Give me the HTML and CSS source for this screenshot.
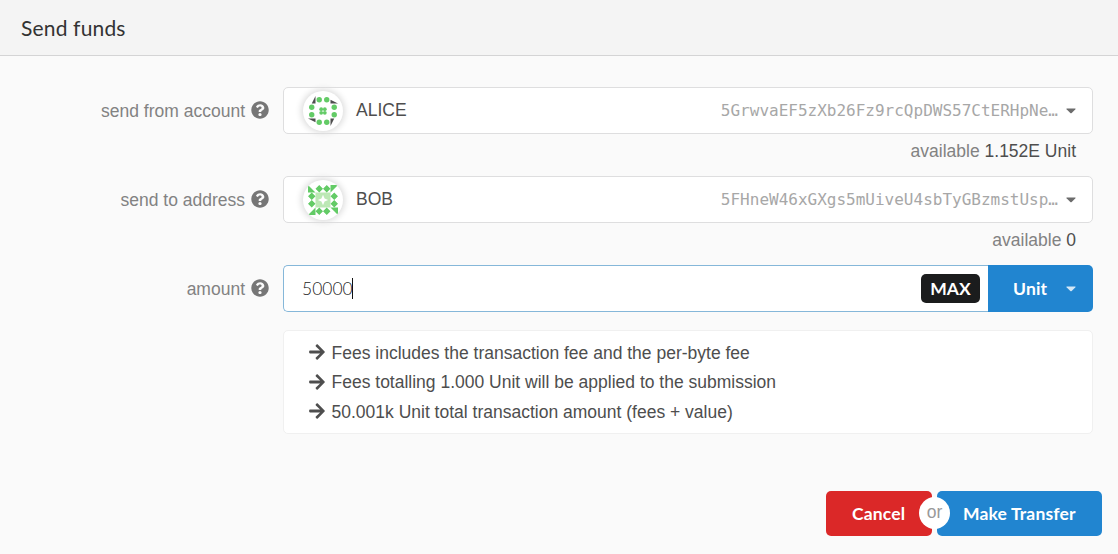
FILE: index.html
```html
<!DOCTYPE html>
<html lang="en">
<head>
<meta charset="utf-8">
<title>Send funds</title>
<link rel="stylesheet" href="styles.css">
</head>
<body>
<svg class="defs" aria-hidden="true">
  <symbol id="help" viewBox="0 0 512 512"><path d="M504 256c0 136.997-111.043 248-248 248S8 392.997 8 256C8 119.083 119.043 8 256 8s248 111.083 248 248zM262.655 90c-54.497 0-89.255 22.957-116.549 63.758-3.536 5.286-2.353 12.415 2.715 16.258l34.699 26.31c5.205 3.947 12.621 3.008 16.665-2.122 17.864-22.658 30.113-35.797 57.303-35.797 20.429 0 45.698 13.148 45.698 32.958 0 14.976-12.363 22.667-32.534 33.976C247.128 238.528 216 254.941 216 296v4c0 6.627 5.373 12 12 12h56c6.627 0 12-5.373 12-12v-1.333c0-28.462 83.186-29.647 83.186-106.667 0-58.002-60.165-102-116.531-102zM256 338c-25.365 0-46 20.635-46 46 0 25.364 20.635 46 46 46s46-20.636 46-46c0-25.365-20.635-46-46-46z"/></symbol>
  <symbol id="arrow" viewBox="0 0 448 512"><path d="M190.5 66.9l22.2-22.2c9.4-9.4 24.6-9.4 33.9 0L441 239c9.4 9.4 9.4 24.6 0 33.9L246.6 467.3c-9.4 9.4-24.6 9.4-33.9 0l-22.2-22.2c-9.5-9.5-9.3-25 .4-34.3L311.400 296H24c-13.300 0-24-10.700-24-24v-32c0-13.300 10.700-24 24-24h287.400L190.900 101.200c-9.800-9.300-10-24.800-.4-34.300z"/></symbol>
</svg>
<header class="header">Send funds</header>
<main class="content">
  <div class="row">
    <label class="label">send from account <svg class="help"><use href="#help"/></svg></label>
    <div class="field">
      <div class="select">
        <svg class="identicon" viewBox="-20 -20 40 40">
          <defs><g id="alice-side"><circle cx="-3.75" cy="-11.25" r="2.7"/><circle cx="3.75" cy="-11.25" r="2.7"/><path class="dark" d="M-7.500-15v7.500h-3.750z"/><circle cx="-1.800" cy="-1.800" r="1.900"/></g></defs>
          <g class="green"><use href="#alice-side"/><use href="#alice-side" transform="rotate(90)"/><use href="#alice-side" transform="rotate(180)"/><use href="#alice-side" transform="rotate(270)"/></g>
        </svg>
        <span class="name">ALICE</span>
        <span class="address">5GrwvaEF5zXb26Fz9rcQpDWS57CtERHpNe…</span>
        <svg class="caret" viewBox="0 0 10 6"><path d="M.8.5h8.400q.8.100.2.800L5.700 5q-.7.700-1.400 0L.6 1.300Q0 .6.8.500z"/></svg>
      </div>
      <div class="balance">available <b>1.152E Unit</b></div>
    </div>
  </div>
  <div class="row">
    <label class="label">send to address <svg class="help"><use href="#help"/></svg></label>
    <div class="field">
      <div class="select">
        <svg class="identicon" viewBox="-20 -20 40 40">
          <defs><g id="bob-side"><path d="M-3.750-15l3.750 3.750-3.750 3.750-3.750-3.750zM3.750-15l3.750 3.750-3.750 3.750L0-11.250zM-15-15l7.500 7.500H-15z"/></g></defs>
          <path class="pale" d="M-7.500-7.500h15v15h-15z"/>
          <g class="green"><use href="#bob-side"/><use href="#bob-side" transform="rotate(90)"/><use href="#bob-side" transform="rotate(180)"/><use href="#bob-side" transform="rotate(270)"/></g>
          <path class="white" d="M0-5.200L1.600-1.600 5.200 0 1.600 1.600 0 5.200-1.600 1.600-5.200 0-1.600-1.600z"/>
        </svg>
        <span class="name">BOB</span>
        <span class="address">5FHneW46xGXgs5mUiveU4sbTyGBzmstUsp…</span>
        <svg class="caret" viewBox="0 0 10 6"><path d="M.8.5h8.400q.8.100.2.800L5.700 5q-.7.700-1.400 0L.6 1.300Q0 .6.8.500z"/></svg>
      </div>
      <div class="balance">available <b>0</b></div>
    </div>
  </div>
  <div class="row amount-row">
    <label class="label">amount <svg class="help"><use href="#help"/></svg></label>
    <div class="field amount">
      <div class="input"><span class="value">50000</span><span class="cursor"></span><span class="max">MAX</span></div>
      <div class="unit">Unit<svg class="caret" viewBox="0 0 10 6"><path d="M.8.5h8.400q.8.100.2.800L5.700 5q-.7.700-1.400 0L.6 1.300Q0 .6.8.500z"/></svg></div>
    </div>
  </div>
  <ul class="fees">
    <li><svg class="arrow"><use href="#arrow"/></svg>Fees includes the transaction fee and the per-byte fee</li>
    <li><svg class="arrow"><use href="#arrow"/></svg>Fees totalling 1.000 Unit will be applied to the submission</li>
    <li><svg class="arrow"><use href="#arrow"/></svg>50.001k Unit total transaction amount (fees + value)</li>
  </ul>
</main>
<footer class="actions">
  <div class="button cancel">Cancel</div>
  <div class="gap"><span class="or">or</span></div>
  <div class="button transfer">Make Transfer</div>
</footer>
</body>
</html>
```
FILE: styles.css
```css
* { box-sizing: border-box; }
body {
  margin: 0;
  width: 1118px;
  height: 554px;
  overflow: hidden;
  display: flex;
  flex-direction: column;
  background: #fafafa;
  color: #4e4e4e;
  font: 17.5px/24px "Liberation Sans", Arial, sans-serif;
}
.defs { display: none; }
.header {
  height: 56px;
  padding: 0 21px;
  border-bottom: 1px solid #d4d4d5;
  background: #f4f4f4;
  color: #333;
  font: 21px/56px Lato, sans-serif;
  letter-spacing: 0.17px;
}
.content { padding: 31px 25px 0 0; }
.row { display: flex; height: 89px; }
.amount-row { height: 65px; }
.label {
  width: 283px;
  height: 47px;
  padding-right: 14px;
  display: flex;
  align-items: center;
  justify-content: flex-end;
  gap: 6px;
  color: #828282;
}
.help { width: 18px; height: 18px; margin-bottom: 1px; fill: #767676; }
.field { flex: 1; }
.select {
  height: 47px;
  display: flex;
  align-items: center;
  padding: 0 16px 0 19px;
  border: 1px solid #dededf;
  border-radius: 5px;
  background: #fff;
}
.identicon { width: 40px; height: 40px; border-radius: 50%; background: #fff; box-shadow: 0 0 6px 2px #ddd; }
.green { fill: #63cb66; }
.dark { fill: #4e4e4e; }
.pale { fill: #bce8b5; }
.white { fill: #fff; }
.name { margin: 0 0 2px 13px; }
.address { margin-left: auto; color: #a7a7a7; font: 16px/24px "DejaVu Sans Mono", monospace; }
.caret { width: 10px; height: 6px; margin-left: 8px; fill: #6c6c6c; }
.balance { padding: 5px 17px 0 0; text-align: right; color: #828282; }
.balance b { color: #4e4e4e; font-weight: 400; }
.amount { display: flex; height: 47px; }
.input {
  flex: 1;
  display: flex;
  align-items: center;
  padding: 0 7px 0 18px;
  border: 1px solid #85b7d9;
  border-right: 0;
  border-radius: 5px 0 0 5px;
  background: #fff;
  color: #222;
  font: 300 17.5px/24px Lato, sans-serif;
}
.cursor { width: 1px; height: 21px; margin-left: -1px; background: #111; }
.max {
  width: 59px;
  height: 29px;
  margin: 0 1px 0 auto;
  border-radius: 5px;
  background: #1b1c1d;
  color: #fff;
  font: 700 17.5px/29px Lato, sans-serif;
  text-align: center;
}
.unit {
  width: 105px;
  display: flex;
  align-items: center;
  justify-content: space-between;
  padding: 0 17px 0 25px;
  border-radius: 0 5px 5px 0;
  background: #2185d0;
  color: #fff;
  font: 700 17.5px/24px Lato, sans-serif;
  letter-spacing: 0.2px;
}
.unit .caret { fill: #d3e7f6; }
.fees {
  height: 104px;
  margin: 0 0 0 283px;
  padding: 7px 25px;
  border: 1px solid #f0f0f0;
  border-radius: 5px;
  background: #fff;
  list-style: none;
}
.fees li { display: flex; align-items: center; height: 29.5px; }
.arrow { width: 16px; height: 18px; margin: 0 6.5px 1px 0; fill: #4e4e4e; }
.actions { display: flex; justify-content: flex-end; padding: 57px 16px 0 0; }
.button { height: 45px; border-radius: 5px; color: #fff; font: 700 17.5px/45px Lato, sans-serif; letter-spacing: 0.15px; }
.cancel { width: 106px; padding-left: 26px; background: #db2828; }
.transfer { width: 165px; padding-left: 26px; background: #2185d0; }
.gap { position: relative; width: 5px; }
.or {
  position: absolute;
  left: -13px;
  top: 6px;
  width: 31px;
  height: 32px;
  border-radius: 50%;
  background: #fff;
  color: #999;
  line-height: 30px;
  text-align: center;
}
```
